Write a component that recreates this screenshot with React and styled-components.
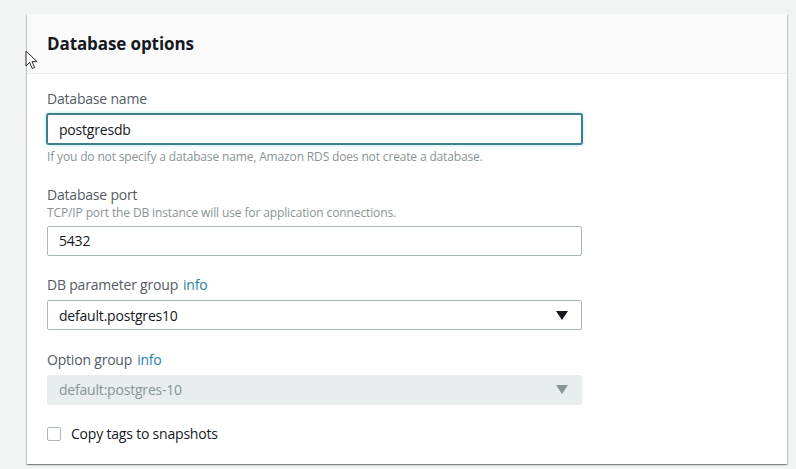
import React from 'react'
import styled, { createGlobalStyle } from 'styled-components'

const GlobalStyle = createGlobalStyle`
    html, body {
        margin: 0;
        padding: 0;
        background: #f2f3f3;
        font-family: "Open Sans", "Noto Sans", sans-serif;
    }
`

const Page = styled.div`
    position: relative;
    padding: 14px 9px 5px 27px;
    width: 760px;
`

const Card = styled.section`
    background: #ffffff;
    box-shadow: 0 1px 1px 0 rgba(0, 28, 36, 0.3), 1px 1px 1px 0 rgba(0, 28, 36, 0.15), -1px 1px 1px 0 rgba(0, 28, 36, 0.15);
    height: 450px;
    display: flex;
    flex-direction: column;
`

const Header = styled.header`
    background: #fafafa;
    border-bottom: 1px solid #eaeded;
    height: 59px;
    display: flex;
    align-items: center;
    padding-left: 20px;
`

const Title = styled.h2`
    margin: 0;
    font-size: 17px;
    font-weight: 700;
    color: #16191f;
    letter-spacing: -0.1px;
`

const Body = styled.div`
    padding: 15px 20px 0;
    display: flex;
    flex-direction: column;
    gap: 19.5px;
    letter-spacing: -0.2px;
`

const Field = styled.div`
    display: flex;
    flex-direction: column;
    width: 535px;
`

const Label = styled.label`
    font-size: 14px;
    line-height: 20px;
    color: #545b64;
    margin-bottom: ${p => (p.$tight ? '0' : '5px')};
`

const Info = styled.a`
    color: #2a82a6;
    margin-left: 5px;
    text-decoration: none;
`

const Description = styled.div`
    font-size: 12px;
    line-height: 16px;
    color: #879596;
    margin-bottom: 5px;
    letter-spacing: -0.12px;
`

const Hint = styled.div`
    font-size: 12px;
    line-height: 16px;
    color: #879596;
    margin-top: 5px;
    letter-spacing: -0.15px;
`

const Input = styled.div`
    box-sizing: border-box;
    height: 30px;
    border: 1px solid ${p => (p.$focused ? '#3f7f8a' : '#aab7b8')};
    box-shadow: ${p => (p.$focused ? '0 0 0 1px #3f7f8a, 0 0 3px 2px #cdf1f6' : 'none')};
    border-radius: 2px;
    padding: 0 11px;
    display: flex;
    align-items: center;
    font-size: 14px;
    color: #16191f;
    background: #ffffff;
`

const Select = styled.div`
    box-sizing: border-box;
    height: 30px;
    border: 1px solid ${p => (p.$disabled ? '#eaeded' : '#aab7b8')};
    border-radius: 2px;
    background: ${p => (p.$disabled ? '#eaeded' : '#ffffff')};
    color: ${p => (p.$disabled ? '#879596' : '#16191f')};
    padding: 0 13px 0 11px;
    display: flex;
    align-items: center;
    justify-content: space-between;
    font-size: 14px;
`

const Arrow = styled.span`
    width: 0;
    height: 0;
    border-left: 6px solid transparent;
    border-right: 6px solid transparent;
    border-top: 9px solid ${p => (p.$disabled ? '#879596' : '#16191f')};
`

const CheckRow = styled.label`
    display: flex;
    align-items: center;
    gap: 10px;
    font-size: 14px;
    color: #16191f;
`

const Box = styled.span`
    box-sizing: border-box;
    width: 14px;
    height: 14px;
    border: 1px solid #aab7b8;
    border-radius: 2px;
    background: #ffffff;
`

const Cursor = styled.svg`
    position: absolute;
    left: 25px;
    top: 50px;
`

export default function App() {
    return (
        <Page>
            <GlobalStyle />
            <Card>
                <Header>
                    <Title>Database options</Title>
                </Header>
                <Body>
                    <Field>
                        <Label>Database name</Label>
                        <Input $focused>postgresdb</Input>
                        <Hint>If you do not specify a database name, Amazon RDS does not create a database.</Hint>
                    </Field>
                    <Field>
                        <Label $tight>Database port</Label>
                        <Description>TCP/IP port the DB instance will use for application connections.</Description>
                        <Input>5432</Input>
                    </Field>
                    <Field>
                        <Label>DB parameter group<Info>info</Info></Label>
                        <Select>
                            default.postgres10
                            <Arrow />
                        </Select>
                    </Field>
                    <Field>
                        <Label>Option group<Info>info</Info></Label>
                        <Select $disabled>
                            default:postgres-10
                            <Arrow $disabled />
                        </Select>
                    </Field>
                    <CheckRow>
                        <Box />
                        Copy tags to snapshots
                    </CheckRow>
                </Body>
            </Card>
            <Cursor width="14" height="21" viewBox="0 0 14 21">
                <path d="M1 1 L1 16 L4.6 12.4 L7.2 18.5 L9.6 17.5 L7 11.6 L12 11.6 Z" fill="#ffffff" stroke="#2a2a2a" strokeWidth="1" strokeLinejoin="round" />
            </Cursor>
        </Page>
    )
}
